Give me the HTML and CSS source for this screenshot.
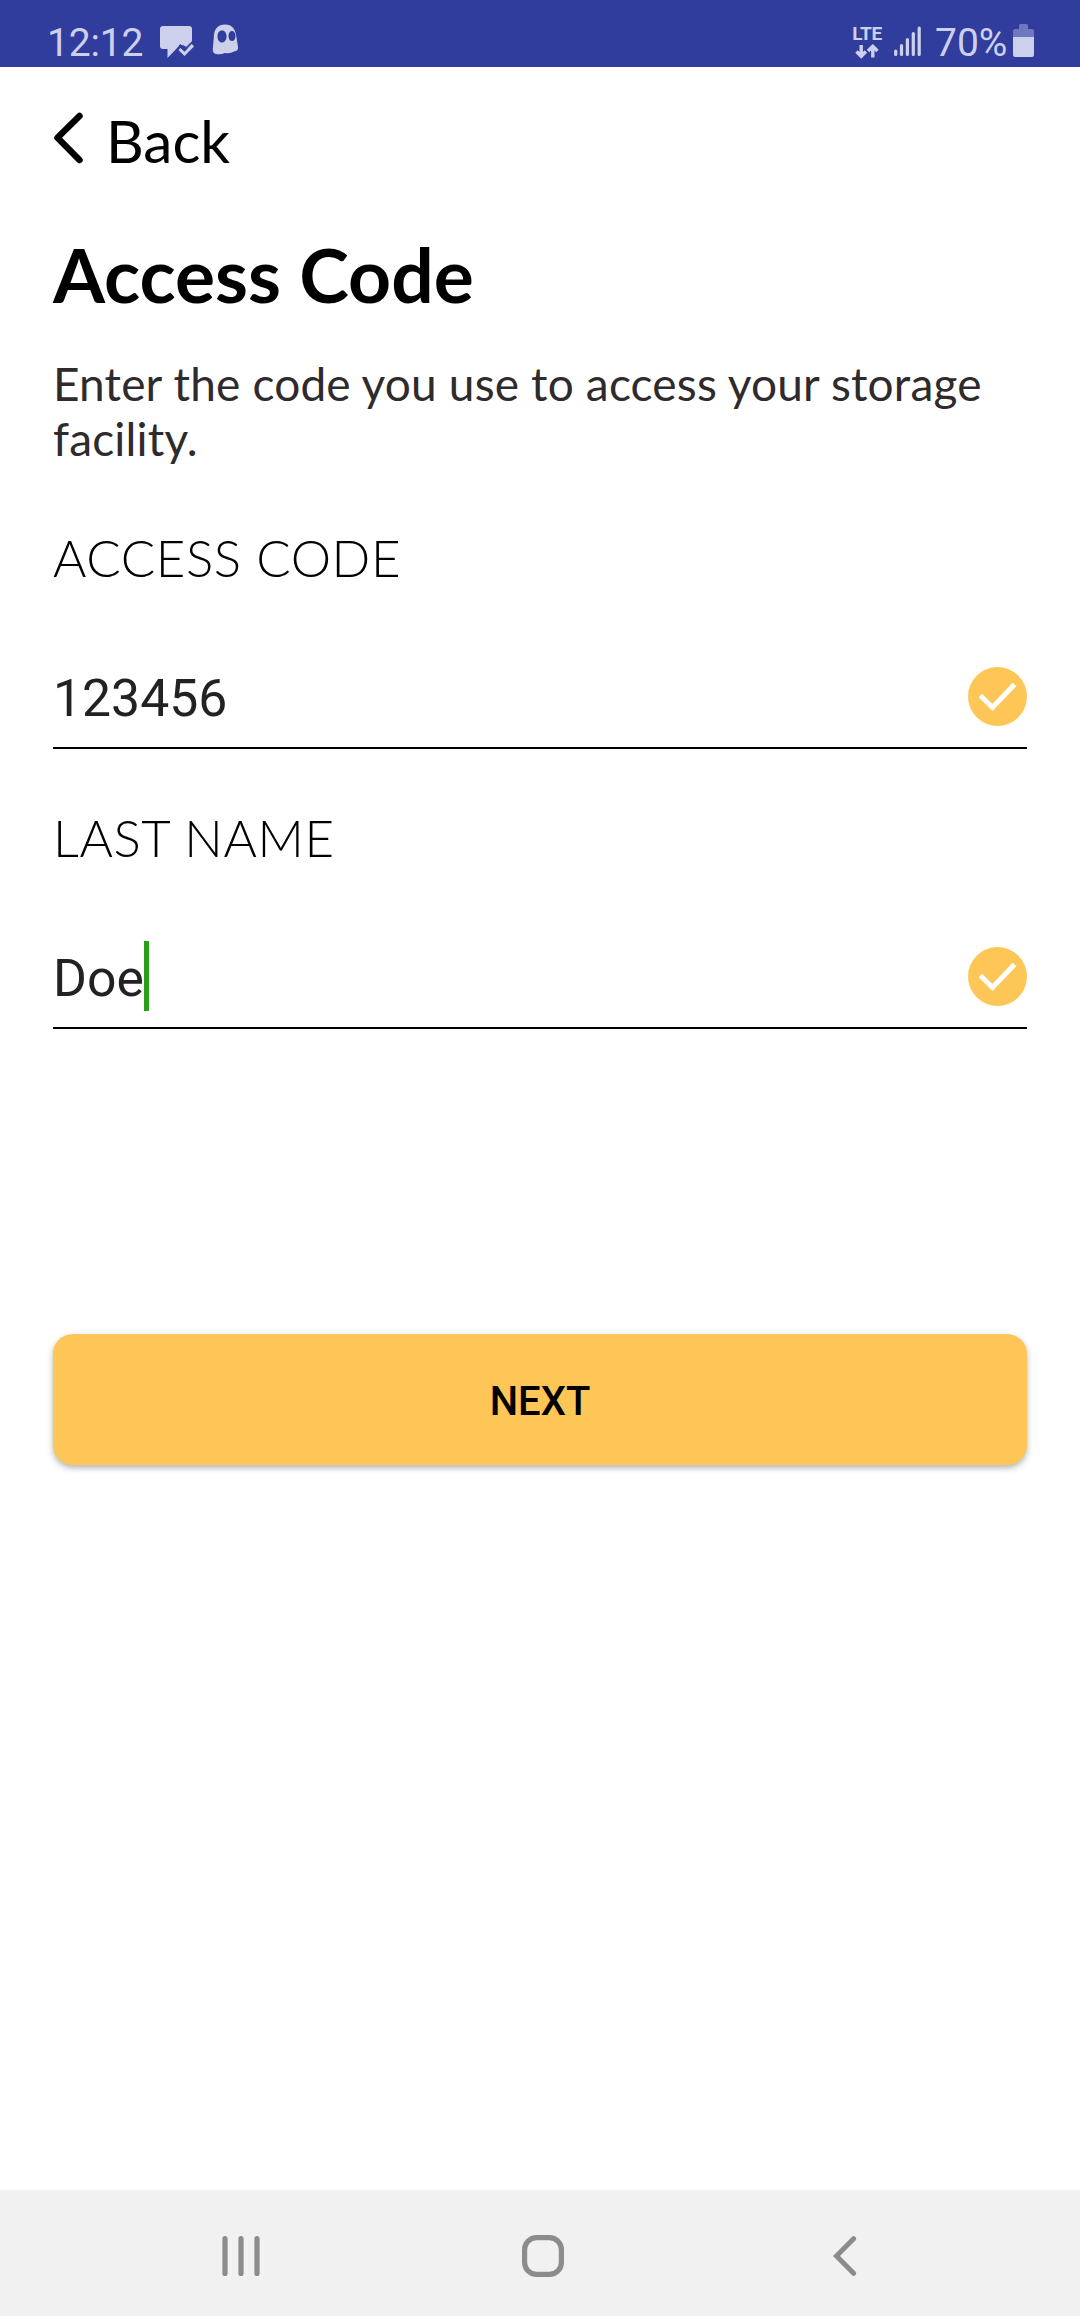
FILE: index.html
```html
<!DOCTYPE html>
<html lang="en">
<head>
<meta charset="utf-8">
<title>Access Code</title>
<link rel="stylesheet" href="styles.css">
</head>
<body>
<div class="screen">
  <header class="status">
    <div class="status-left">
      <span class="clock">12:12</span>
      <svg class="icon-message" width="34" height="33" viewBox="0 0 34 33"><path fill="currentColor" d="M3 0H29Q32 0 32 3V19L27.500 22.500L25 20L20.500 18.500L7.500 32V23H3Q0 23 0 20V3Q0 0 3 0Z"/><path fill="none" stroke="#303d9d" stroke-width="2" d="M17 24L21 19"/><path fill="none" stroke="currentColor" stroke-width="3" d="M19.500 23L24.500 27.800L33 19.300"/><path fill="none" stroke="#303d9d" stroke-width="1.800" d="M19.500 19L24.500 23.800L32.500 15.800"/></svg>
      <svg class="icon-ghost" width="27" height="31" viewBox="0 0 27 31"><path fill="currentColor" fill-rule="evenodd" d="M13 .5C20 .5 23 5 24 10.500L26 23Q26.500 27 22 27.500Q18 30 13 29Q8 31 4 30Q.5 29.500 .8 25L2 11C2.500 5 6 .5 13 .5ZM10 6.500C7 6.500 5.500 9 5.500 12.500S7.500 18.500 10 18.500S14.500 16 14.500 12.500S13 6.500 10 6.500ZM20 7C17.800 7 16.500 9 16.500 12S18 17 20 17S23.500 15 23.500 12S22 7 20 7Z"/></svg>
    </div>
    <div class="status-right">
      <div class="network">
        <span class="lte">LTE</span>
        <svg width="24" height="15" viewBox="0 0 24 15"><path fill="none" stroke="currentColor" stroke-width="3.400" d="M6.200 1V12M1.500 7.500L6.200 12.300L10.900 7.500M17.800 13.500V3M13 7L17.800 2.300L22.500 7"/></svg>
      </div>
      <svg class="icon-signal" width="27" height="31" viewBox="0 0 27 31"><path fill="none" stroke="currentColor" stroke-width="3.200" stroke-linecap="round" d="M1.700 25V28.500M7.500 19.500V28.500M13.400 13.500V28.500M19.300 7.500V28.500M25.200 2V28.500"/></svg>
      <span class="percent">70%</span>
      <svg class="icon-battery" width="21" height="33" viewBox="0 0 21 33"><path fill="#6f78bd" d="M6 5V1.500Q6 0 7.500 0H13.500Q15 0 15 1.500V5H19Q21 5 21 7V13H0V7Q0 5 2 5Z"/><path fill="currentColor" d="M0 13H21V31Q21 33 19 33H2Q0 33 0 31Z"/></svg>
    </div>
  </header>
  <main class="content">
    <nav class="back">
      <svg class="back-arrow" width="30" height="52" viewBox="0 0 30 52"><path fill="none" stroke="#000" stroke-width="6.500" stroke-linecap="round" stroke-linejoin="round" d="M26.500 4L4.500 25.800L26.500 48"/></svg>
      <span class="back-text">Back</span>
    </nav>
    <h1 class="title">Access Code</h1>
    <p class="description">Enter the code you use to access your storage facility.</p>
    <section class="field">
      <div class="label">ACCESS CODE</div>
      <div class="entry">
        <span class="value">123456</span>
        <svg class="check" width="59" height="59" viewBox="0 0 59 59"><circle cx="29.500" cy="29.500" r="29.500" fill="#fec657"/><path fill="none" stroke="#fff" stroke-width="5" d="M12.300 28.500L24.500 40.500L46.500 17.500"/></svg>
      </div>
    </section>
    <section class="field">
      <div class="label">LAST NAME</div>
      <div class="entry">
        <span class="value">Doe<i class="caret"></i></span>
        <svg class="check" width="59" height="59" viewBox="0 0 59 59"><circle cx="29.500" cy="29.500" r="29.500" fill="#fec657"/><path fill="none" stroke="#fff" stroke-width="5" d="M12.300 28.500L24.500 40.500L46.500 17.500"/></svg>
      </div>
    </section>
    <button class="next">NEXT</button>
  </main>
  <footer class="navbar">
    <svg class="nav-recents" width="38" height="42" viewBox="0 0 38 42"><path fill="none" stroke="#8c8c8c" stroke-width="5.200" stroke-linecap="round" d="M3 3.600V38.400M19 3.600V38.400M35 3.600V38.400"/></svg>
    <svg class="nav-home" width="42" height="42" viewBox="0 0 42 42"><rect x="2.600" y="2.600" width="36.800" height="36.800" rx="12" fill="none" stroke="#8c8c8c" stroke-width="5.200"/></svg>
    <svg class="nav-back" width="24" height="42" viewBox="0 0 24 42"><path fill="none" stroke="#8c8c8c" stroke-width="5" stroke-linecap="round" d="M20.600 3.700L3.500 21L20.600 38.300"/></svg>
  </footer>
</div>
</body>
</html>
```
FILE: styles.css
```css
* { box-sizing: border-box; }
body { margin: 0; background: #fff; }
svg { display: block; flex: none; }
.screen {
  width: 1080px;
  height: 2316px;
  display: flex;
  flex-direction: column;
  font-family: Lato, sans-serif;
  color: #000;
}
.status {
  height: 67px;
  flex: none;
  padding: 0 46px 0 47px;
  display: flex;
  justify-content: space-between;
  background: #303d9d;
  color: #cdd0eb;
  font-family: Roboto, sans-serif;
  font-size: 39px;
  line-height: 44px;
}
.status-left, .status-right { display: flex; align-items: flex-start; }
.clock, .percent { padding-top: 21px; }
.clock { width: 113px; letter-spacing: -.2px; }
.icon-message { margin-top: 26px; }
.icon-ghost { margin: 24px 0 0 18px; }
.network {
  width: 32px;
  display: flex;
  flex-direction: column;
  align-items: center;
  padding-top: 24px;
  gap: 1px;
  margin-right: 11px;
}
.lte { font-size: 19px; line-height: 19px; font-weight: 700; letter-spacing: -.3px; }
.icon-signal { margin: 26px 14px 0 0; }
.percent { width: 78px; }
.icon-battery { margin-top: 24px; }
.content { flex: 1; padding: 43px 53px 0; }
.back { height: 60px; display: flex; }
.back-arrow { margin-top: 2px; }
.back-text { margin-left: 23px; font-size: 58.500px; line-height: 60px; }
.title { margin: 64px 0 0; font-size: 75px; line-height: 80px; font-weight: 700; }
.description { margin: 42px 0 62px; font-size: 46px; line-height: 55px; letter-spacing: .17px; color: #2f2b2c; }
.field { height: 280px; }
.label { font-size: 51px; line-height: 60px; font-weight: 300; letter-spacing: .6px; }
.entry {
  margin-top: 61px;
  height: 100px;
  border-bottom: 2px solid #000;
  display: flex;
  align-items: center;
  justify-content: space-between;
}
.value {
  display: flex;
  align-items: center;
  padding-top: 2px;
  font-family: Roboto, sans-serif;
  font-size: 51.700px;
  line-height: 70px;
  color: #222;
}
.caret { width: 5px; height: 70px; margin-top: -7px; background: #27a017; }
.check { margin-bottom: 3px; }
.next {
  display: block;
  width: 974px;
  height: 131px;
  margin: 246px 0 0;
  padding: 5px 0 0;
  border: 0;
  border-radius: 20px;
  background: #fec657;
  box-shadow: 0 3px 6px rgba(0, 0, 0, .3);
  font: 500 40px/46px Roboto, sans-serif;
  color: #000;
}
.navbar {
  height: 126px;
  flex: none;
  padding: 45px 223px 0 222px;
  background: #f1f1f1;
  display: flex;
}
.nav-home { margin-left: 262px; }
.nav-back { margin-left: 269px; }
```
